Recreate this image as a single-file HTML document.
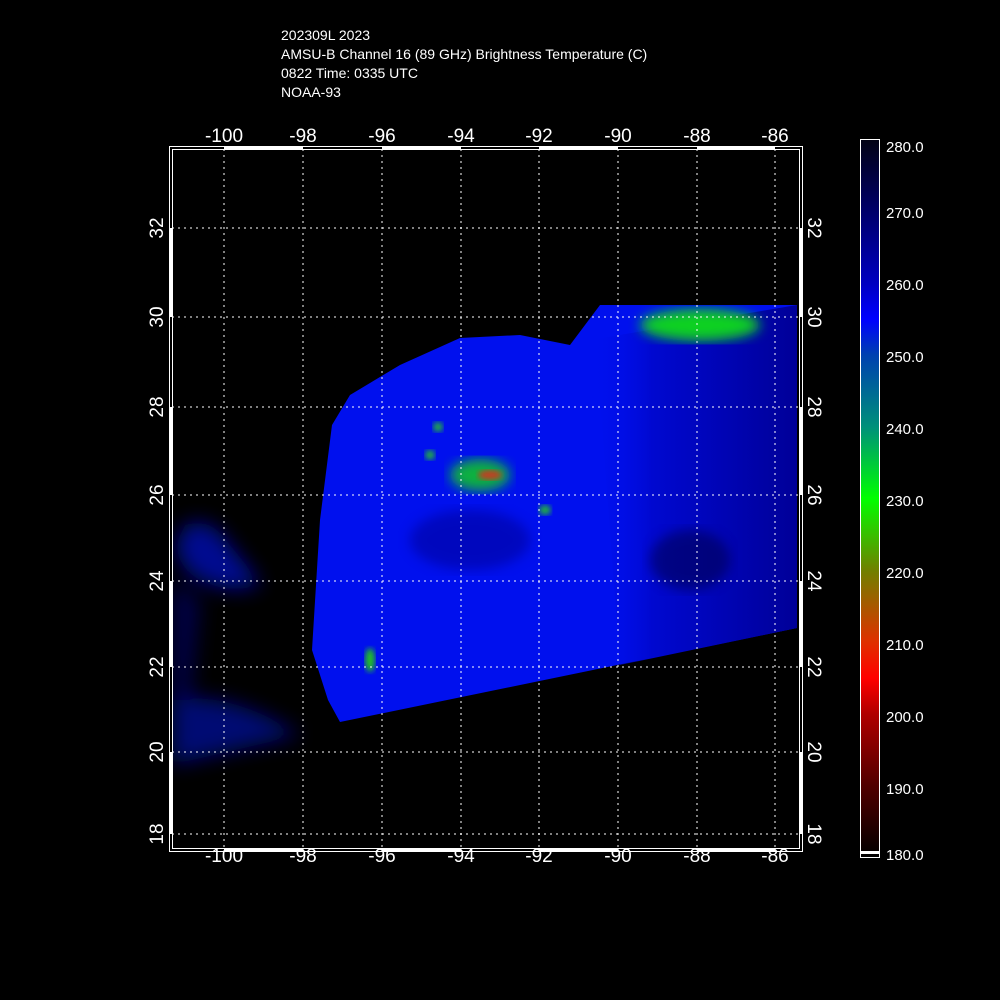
<!DOCTYPE html><html><head><style>
body{margin:0;background:#000;width:1000px;height:1000px;overflow:hidden;position:relative;font-family:"Liberation Sans",sans-serif;color:#fff}
.t{position:absolute;left:281px;font-size:14px;line-height:19px;top:26px}
.l{position:absolute;font-size:19px;width:60px;text-align:center;margin-left:-30px}
.cb{position:absolute;font-size:15px;left:886px}
.r{position:absolute;font-size:19px;width:30px;height:22px;text-align:center;margin-top:-11px}
</style></head><body>
<div class="t">202309L 2023<br>AMSU-B Channel 16 (89 GHz) Brightness Temperature (C)<br>0822 Time: 0335 UTC<br>NOAA-93</div>
<svg width="1000" height="1000" style="position:absolute;left:0;top:0">
<defs>
<filter id="b"><feGaussianBlur stdDeviation="6"/></filter>
<filter id="b3"><feGaussianBlur stdDeviation="10"/></filter>
<filter id="b2"><feGaussianBlur stdDeviation="3"/></filter>
<linearGradient id="cg" x1="0" y1="0" x2="0" y2="1">
<stop offset="0" stop-color="#020214"/><stop offset="0.1" stop-color="#00006a"/><stop offset="0.2" stop-color="#0000c0"/><stop offset="0.25" stop-color="#0000ff"/><stop offset="0.3" stop-color="#0040b0"/><stop offset="0.4" stop-color="#00907a"/><stop offset="0.5" stop-color="#00ff00"/><stop offset="0.6" stop-color="#708000"/><stop offset="0.7" stop-color="#e03000"/><stop offset="0.75" stop-color="#ff0000"/><stop offset="0.8" stop-color="#b00000"/><stop offset="0.9" stop-color="#500000"/><stop offset="1" stop-color="#000"/></linearGradient>
<linearGradient id="rg" x1="0" y1="0" x2="1" y2="0"><stop offset="0" stop-color="#0010ee" stop-opacity="0"/><stop offset="0.3" stop-color="#0008d0"/><stop offset="1" stop-color="#000098"/></linearGradient>
</defs>
<clipPath id="c"><rect x="172" y="149" width="628" height="699"/></clipPath>
<g clip-path="url(#c)">
<g filter="url(#b3)" fill="#0008a0" opacity="0.9">
<path d="M185 525 Q210 515 230 545 Q255 575 260 585 Q230 595 200 580 Q180 570 175 545Z"/>
<path d="M172 700 Q230 690 300 735 L172 765Z" fill="#000880"/>
<path d="M172 580 L200 600 L190 700 L172 700Z" fill="#000450"/>
</g>
<polygon points="340,722 797,628 797,305 600,305 585,325 570,345 520,335 460,338 400,365 350,395 332,425 320,520 312,650 328,700" fill="#0010ee"/>
<polygon points="590,340 797,305 797,628 620,665 600,400" fill="url(#rg)"/>
<ellipse cx="700" cy="325" rx="60" ry="16" fill="#10d020" filter="url(#b)"/>
<ellipse cx="480" cy="475" rx="30" ry="16" fill="#10b040" filter="url(#b)"/>
<ellipse cx="490" cy="475" rx="12" ry="5" fill="#c04020" filter="url(#b2)"/>
<ellipse cx="370" cy="660" rx="5" ry="12" fill="#20c020" filter="url(#b2)"/>
<ellipse cx="545" cy="510" rx="6" ry="5" fill="#20b040" filter="url(#b2)"/>
<ellipse cx="438" cy="427" rx="5" ry="5" fill="#20b040" filter="url(#b2)"/>
<ellipse cx="430" cy="455" rx="5" ry="5" fill="#20b040" filter="url(#b2)"/>
<ellipse cx="470" cy="540" rx="60" ry="30" fill="#000090" filter="url(#b)" opacity="0.5"/>
<ellipse cx="690" cy="560" rx="40" ry="30" fill="#000040" filter="url(#b)" opacity="0.5"/>
<g stroke="#fff" stroke-width="1" stroke-dasharray="2,4">
<path d="M224 149V848M303 149V848M382 149V848M461 149V848M539 149V848M618 149V848M697 149V848M775 149V848"/>
<path d="M172 228H800M172 317H800M172 407H800M172 495H800M172 581H800M172 667H800M172 752H800M172 834H800"/>
</g></g>
<g fill="none" stroke="#fff">
<rect x="169.5" y="146.5" width="633" height="705" stroke-width="1"/>
<rect x="172.5" y="149.5" width="627" height="699" stroke-width="1"/>
</g>
<g stroke="#fff" stroke-width="4">
<path d="M224 148H303M382 148H461M539 148H618M697 148H775"/>
<path d="M224 850H303M382 850H461M539 850H618M697 850H775"/>
<path d="M171 228V317M171 407V495M171 581V667M171 752V834"/>
<path d="M801 228V317M801 407V495M801 581V667M801 752V834"/>
</g>
<rect x="860.5" y="139.5" width="19" height="718" fill="url(#cg)" stroke="#fff"/>
<rect x="861" y="851" width="18" height="3" fill="#fff"/>
</svg>
<div class="l" style="left:224px;top:126px">-100</div><div class="l" style="left:303px;top:126px">-98</div><div class="l" style="left:382px;top:126px">-96</div><div class="l" style="left:461px;top:126px">-94</div><div class="l" style="left:539px;top:126px">-92</div><div class="l" style="left:618px;top:126px">-90</div><div class="l" style="left:697px;top:126px">-88</div><div class="l" style="left:775px;top:126px">-86</div>
<div class="l" style="left:224px;top:846px">-100</div><div class="l" style="left:303px;top:846px">-98</div><div class="l" style="left:382px;top:846px">-96</div><div class="l" style="left:461px;top:846px">-94</div><div class="l" style="left:539px;top:846px">-92</div><div class="l" style="left:618px;top:846px">-90</div><div class="l" style="left:697px;top:846px">-88</div><div class="l" style="left:775px;top:846px">-86</div>
<div style="position:absolute;left:143px;top:0">
<div class="r" style="top:228px;transform:rotate(-90deg)">32</div><div class="r" style="top:317px;transform:rotate(-90deg)">30</div><div class="r" style="top:407px;transform:rotate(-90deg)">28</div><div class="r" style="top:495px;transform:rotate(-90deg)">26</div><div class="r" style="top:581px;transform:rotate(-90deg)">24</div><div class="r" style="top:667px;transform:rotate(-90deg)">22</div><div class="r" style="top:752px;transform:rotate(-90deg)">20</div><div class="r" style="top:834px;transform:rotate(-90deg)">18</div></div>
<div style="position:absolute;left:798px;top:0">
<div class="r" style="top:228px;transform:rotate(90deg)">32</div><div class="r" style="top:317px;transform:rotate(90deg)">30</div><div class="r" style="top:407px;transform:rotate(90deg)">28</div><div class="r" style="top:495px;transform:rotate(90deg)">26</div><div class="r" style="top:581px;transform:rotate(90deg)">24</div><div class="r" style="top:667px;transform:rotate(90deg)">22</div><div class="r" style="top:752px;transform:rotate(90deg)">20</div><div class="r" style="top:834px;transform:rotate(90deg)">18</div></div>
<div class="cb" style="top:139px">280.0</div><div class="cb" style="top:205px">270.0</div><div class="cb" style="top:277px">260.0</div><div class="cb" style="top:349px">250.0</div><div class="cb" style="top:421px">240.0</div><div class="cb" style="top:493px">230.0</div><div class="cb" style="top:565px">220.0</div><div class="cb" style="top:637px">210.0</div><div class="cb" style="top:709px">200.0</div><div class="cb" style="top:781px">190.0</div><div class="cb" style="top:847px">180.0</div>
</body></html>
